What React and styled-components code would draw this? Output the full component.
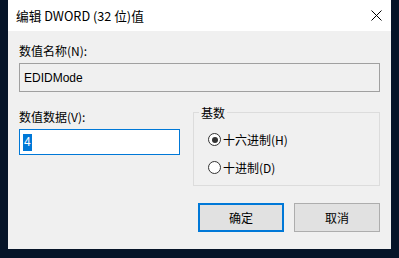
import React from "react";
import styled, { createGlobalStyle } from "styled-components";

const Global = createGlobalStyle`
html, body {
  margin: 0;
  padding: 0;
  background: #061428;
}
body {
  font-family: "Liberation Sans", "Noto Sans CJK SC", sans-serif;
  font-size: 12px;
  color: #000;
}
`;

export default function App() {
  return (
    <Page>
      <Global />
      <Dialog>
        <TitleBar>
          <Title>编辑 DWORD (32 位)值</Title>
          <Close>
            <svg width="11" height="11" viewBox="0 0 11 11">
              <path d="M0.5 0.5 L10.5 10.5 M10.5 0.5 L0.5 10.5" stroke="#000" strokeWidth="1" />
            </svg>
          </Close>
        </TitleBar>
        <Body>
          <Label>数值名称(N):</Label>
          <NameField>EDIDMode</NameField>
          <DataRow>
            <DataCol>
              <Label>数值数据(V):</Label>
              <ValueInput>
                <Selected>4</Selected>
              </ValueInput>
            </DataCol>
            <Group>
              <Legend>基数</Legend>
              <Radio>
                <Dot checked />
                十六进制(H)
              </Radio>
              <Radio>
                <Dot />
                十进制(D)
              </Radio>
            </Group>
          </DataRow>
          <Buttons>
            <Button primary>确定</Button>
            <Button>取消</Button>
          </Buttons>
        </Body>
      </Dialog>
    </Page>
  );
}

const Page = styled.div`
  width: 399px;
  height: 258px;
  padding-left: 8px;
  box-sizing: border-box;
`;

const Dialog = styled.div`
  width: 383px;
  height: 249px;
  background: #f0f0f0;
  display: flex;
  flex-direction: column;
`;

const TitleBar = styled.div`
  height: 31px;
  background: #fff;
  display: flex;
  align-items: center;
  justify-content: space-between;
  padding: 0 9px 0 8px;
`;

const Title = styled.div`
  font-size: 12.7px;
  font-family: "Noto Sans CJK SC", sans-serif;
`;

const Close = styled.div`
  display: flex;
  width: 11px;
  height: 11px;
`;

const Body = styled.div`
  padding: 11px 11px 0 11px;
  display: flex;
  flex-direction: column;
`;

const Label = styled.div`
  font-family: "Noto Sans CJK SC", sans-serif;
  font-size: 12px;
  height: 17px;
  line-height: 17px;
`;

const NameField = styled.div`
  margin-top: 4px;
  height: 27px;
  border: 1px solid #a0a0a0;
  display: flex;
  align-items: center;
  padding-left: 4px;
  color: #000;
`;

const DataRow = styled.div`
  display: flex;
  margin-top: 16px;
  gap: 13px;
`;

const DataCol = styled.div`
  display: flex;
  flex-direction: column;
`;

const ValueInput = styled.div`
  margin-top: 4px;
  width: 161px;
  height: 26px;
  box-sizing: border-box;
  border: 1px solid #0078d7;
  background: #fff;
  display: flex;
  align-items: center;
  padding-left: 3px;
`;

const Selected = styled.span`
  background: #0078d7;
  color: #fff;
  padding: 0 1px;
  line-height: 17px;
`;

const Group = styled.div`
  position: relative;
  margin-top: 4px;
  width: 188px;
  height: 74px;
  border: 1px solid #dcdcdc;
  box-sizing: border-box;
  padding: 18px 0 0 14px;
  display: flex;
  flex-direction: column;
  gap: 11px;
`;

const Legend = styled.span`
  position: absolute;
  top: -8px;
  left: 5px;
  padding: 0 2px;
  background: #f0f0f0;
  font-family: "Noto Sans CJK SC", sans-serif;
  line-height: 15px;
`;

const Radio = styled.div`
  display: flex;
  align-items: center;
  gap: 2px;
  height: 17px;
  font-family: "Noto Sans CJK SC", sans-serif;
`;

const Dot = styled.span`
  width: 11px;
  height: 11px;
  border-radius: 50%;
  border: 1px solid #333;
  background: #fff;
  position: relative;
  &::after {
    content: "";
    display: ${(p) => (p.checked ? "block" : "none")};
    position: absolute;
    left: 2.5px;
    top: 2.5px;
    width: 6px;
    height: 6px;
    border-radius: 50%;
    background: #333;
  }
`;

const Buttons = styled.div`
  display: flex;
  justify-content: flex-end;
  gap: 10px;
  margin-top: 17px;
`;

const Button = styled.button`
  width: 86px;
  height: 29px;
  box-sizing: border-box;
  background: #e1e1e1;
  border: ${(p) => (p.primary ? "2px solid #0078d7" : "1px solid #adadad")};
  font-family: "Noto Sans CJK SC", sans-serif;
  font-size: 12px;
  color: #000;
  padding: 0;
`;
